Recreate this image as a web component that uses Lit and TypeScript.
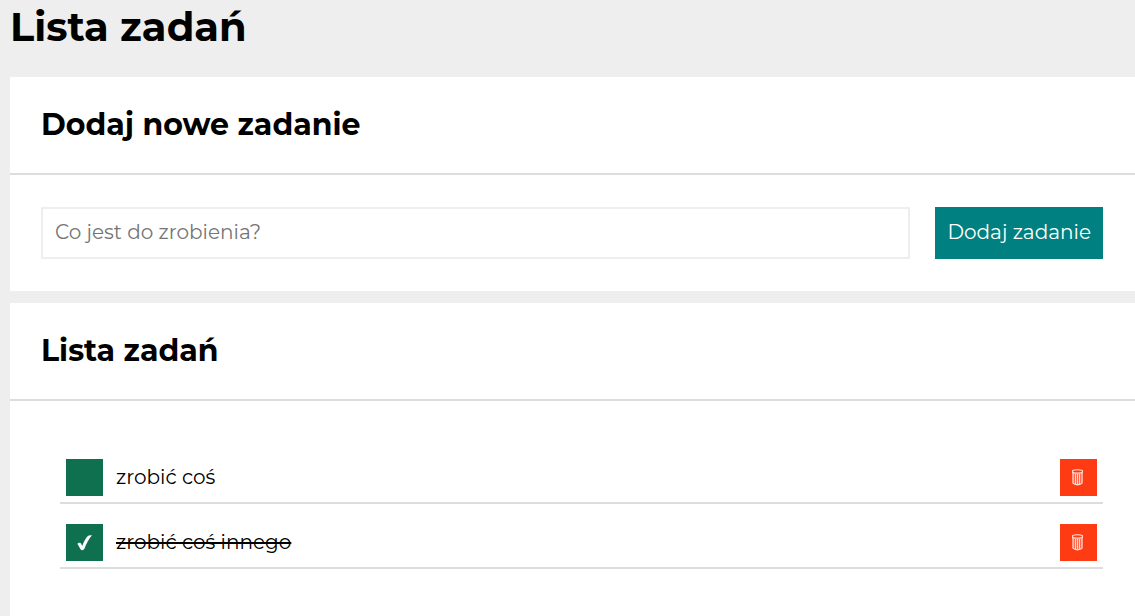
import { LitElement, html, css, svg } from "lit";
import { customElement, state } from "lit/decorators.js";
import { classMap } from "lit/directives/class-map.js";

interface Task {
  content: string;
  done: boolean;
}

const checkIcon = svg`
  <path d="M0.4 9.4 C1.8 8 3.8 8 4.4 9.4 L5.5 11.6 C7.2 7.2 9.2 3.6 11.8 0.8 C13 0 14.6 0 16 0.3 C12.4 4.4 9.8 9.6 7.8 15 C6.8 16.6 4.6 16.6 3.8 15.2 Z" fill="#fff"/>`;

const binIcon = svg`
  <path d="M0.5 3 H10.5 V14 C8.5 16.6 2.5 16.6 0.5 14 Z" fill="#ffb5a4" fill-opacity="0.4"/>
  <g fill="none" stroke="#ffe3dc">
    <path d="M0.6 1.5 C2.6 0.4 8.4 0.4 10.4 1.5 V3.5 C8.4 4.4 2.6 4.4 0.6 3.5 Z" stroke-width="1.1"/>
    <path d="M1 4 V14.2 C3 16.4 8 16.4 10 14.2 V4" stroke-width="1.1"/>
    <path d="M3.5 5 V15 M5.5 5 V15.5 M7.5 5 V15" stroke-width="0.9"/>
  </g>`;

@customElement("app-root")
export class AppRoot extends LitElement {
  @state() private tasks: Task[] = [
    { content: "zrobić coś", done: false },
    { content: "zrobić coś innego", done: true },
  ];

  static styles = css`
    :host {
      display: block;
      box-sizing: border-box;
      min-height: 100vh;
      padding-left: 10px;
      background: #eee;
      color: #000;
      font-family: Montserrat, Inter, sans-serif;
      font-size: 20px;
      font-weight: 400;
      line-height: 24px;
    }
    * {
      box-sizing: border-box;
    }
    main {
      display: flex;
      flex-direction: column;
      min-height: 100vh;
    }
    .title {
      margin: 0;
      padding-bottom: 23px;
      font-size: 40px;
      font-weight: 700;
      line-height: 54px;
    }
    .card {
      background: #fff;
    }
    .card + .card {
      margin-top: 12px;
      flex: 1;
    }
    .heading {
      margin: 0;
      padding: 32px 32px 32px 31px;
      border-bottom: 2px solid #ddd;
      font-size: 30px;
      font-weight: 700;
      line-height: 32px;
    }
    .form {
      display: flex;
      gap: 25px;
      padding: 32px 32px 32px 31px;
    }
    .field {
      flex: 1;
      min-width: 0;
      height: 52px;
      padding: 0 12px 2px;
      border: 2px solid #eee;
      background: #fff;
      color: inherit;
      font: inherit;
    }
    .field::placeholder {
      color: #757575;
    }
    .add {
      height: 52px;
      padding: 0 12px 2px 13px;
      border: 0;
      background: teal;
      color: #fff;
      font: inherit;
      cursor: pointer;
    }
    .list {
      display: grid;
      gap: 14px;
      margin: 0;
      padding: 52px 32px 52px 50px;
      list-style: none;
    }
    .item {
      display: flex;
      align-items: center;
      gap: 13px;
      padding: 6px;
      border-bottom: 2px solid #ddd;
    }
    .toggle {
      display: grid;
      place-items: center;
    }
    .toggle > * {
      grid-area: 1 / 1;
    }
    .box {
      appearance: none;
      width: 37px;
      height: 37px;
      margin: 0;
      background: #0f704f;
      cursor: pointer;
    }
    .check {
      width: 15px;
      height: 16px;
      pointer-events: none;
    }
    .text {
      flex: 1;
      padding-bottom: 2px;
    }
    .done {
      text-decoration: line-through;
      text-decoration-thickness: 2px;
    }
    .remove {
      display: grid;
      place-items: center;
      width: 37px;
      height: 37px;
      padding: 0 2px 0 0;
      border: 0;
      background: #ff3b14;
      cursor: pointer;
    }
    .bin {
      width: 11px;
      height: 17px;
    }
  `;

  private add(e: Event) {
    e.preventDefault();
    const input = this.renderRoot.querySelector<HTMLInputElement>("#new-task")!;
    const content = input.value.trim();
    if (content) this.tasks = [...this.tasks, { content, done: false }];
    input.value = "";
    input.focus();
  }

  private toggle(index: number) {
    this.tasks = this.tasks.map((t, i) => (i === index ? { ...t, done: !t.done } : t));
  }

  private remove(index: number) {
    this.tasks = this.tasks.filter((_, i) => i !== index);
  }

  render() {
    return html`
      <main>
        <h1 class="title">Lista zadań</h1>
        <section class="card">
          <h2 class="heading">Dodaj nowe zadanie</h2>
          <form class="form" @submit=${this.add}>
            <input id="new-task" class="field" type="text" aria-label="Co jest do zrobienia?" placeholder="Co jest do zrobienia?" />
            <button class="add">Dodaj zadanie</button>
          </form>
        </section>
        <section class="card">
          <h2 class="heading">Lista zadań</h2>
          <ul class="list">
            ${this.tasks.map(
              (task, i) => html`
                <li class="item">
                  <span class="toggle">
                    <input id="task-${i}" class="box" type="checkbox" .checked=${task.done} @change=${() => this.toggle(i)} />
                    ${task.done ? html`<svg class="check" viewBox="0 0 16 17" aria-hidden="true">${checkIcon}</svg>` : null}
                  </span>
                  <label for="task-${i}" class="text"><span class=${classMap({ done: task.done })}>${task.content}</span></label>
                  <button class="remove" type="button" aria-label="Usuń" @click=${() => this.remove(i)}>
                    <svg class="bin" viewBox="0 0 11 17" aria-hidden="true">${binIcon}</svg>
                  </button>
                </li>
              `,
            )}
          </ul>
        </section>
      </main>
    `;
  }
}
